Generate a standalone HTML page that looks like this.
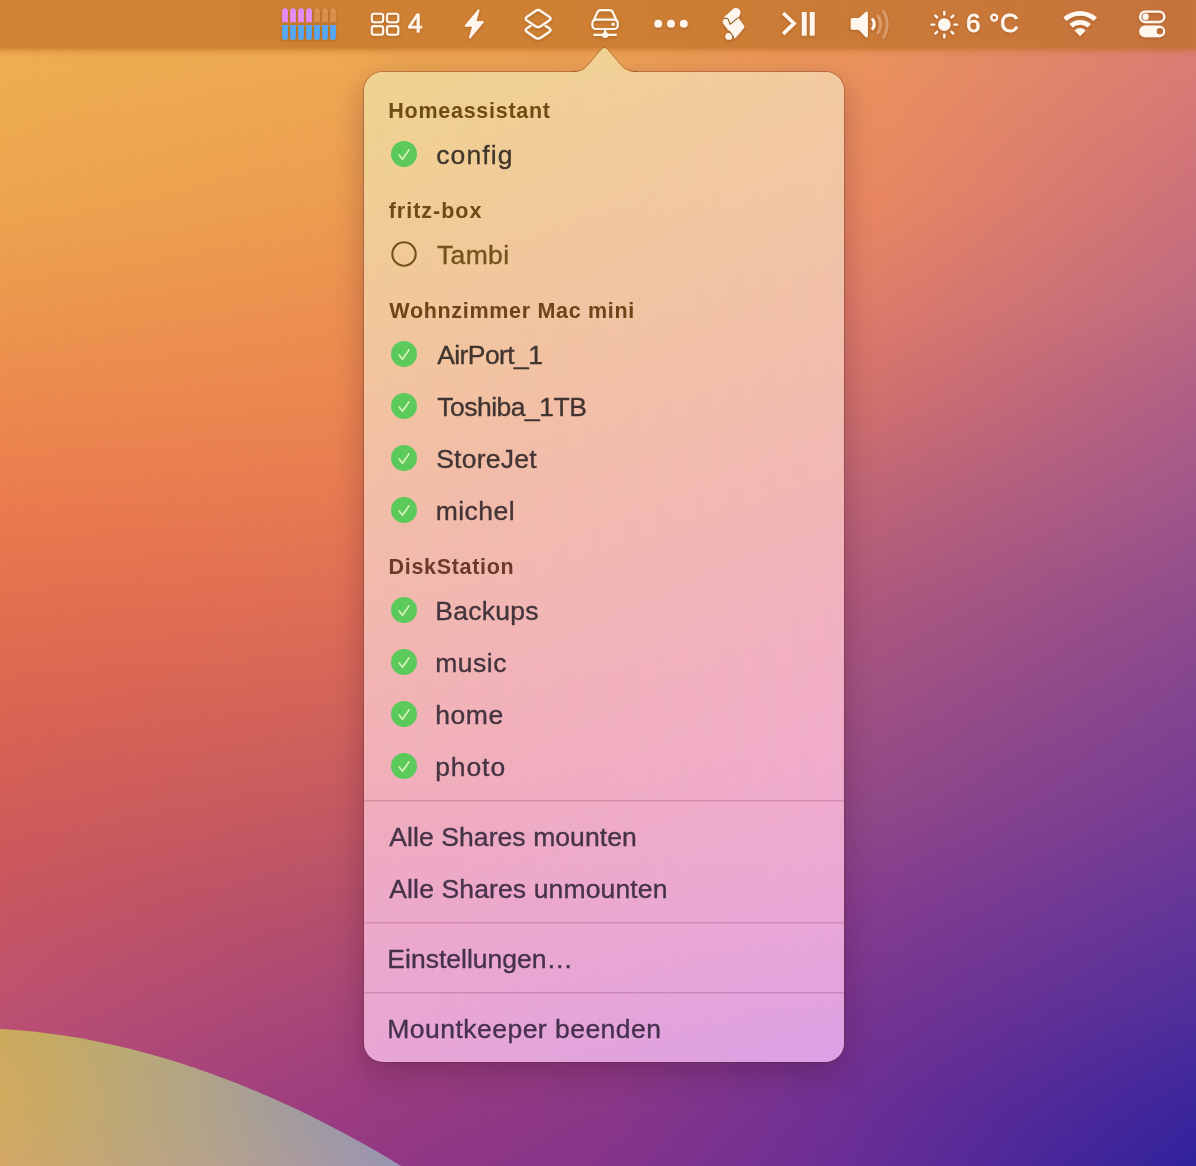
<!DOCTYPE html>
<html lang="de">
<head>
<meta charset="utf-8">
<title>Mountkeeper</title>
<style>
html,body{margin:0;padding:0;}
body{width:1196px;height:1166px;overflow:hidden;position:relative;background:#c8606a;
  font-family:"Liberation Sans",sans-serif;}
.wp{position:absolute;left:0;top:0;width:1196px;height:1166px;}
/* wallpaper: 4 vertical-gradient columns blended horizontally with masks */
.c0{background:linear-gradient(to bottom,#eeae50 0px,#eeae50 70px,#eda54f 200px,#ec984e 300px,#ec8a4e 400px,#eb7c4e 500px,#e4704f 600px,#dc6652 700px,#d25e58 800px,#c85660 900px,#be5270 1000px,#b04a78 1100px,#a8467c 1166px);}
.c1{background:linear-gradient(to bottom,#eea852 0px,#eea852 60px,#ec9c50 200px,#ec9050 300px,#eb8650 400px,#e67a52 500px,#de6e56 600px,#d2645a 700px,#c45a62 800px,#b4506c 900px,#a64678 1000px,#9a3c80 1100px,#943884 1166px);
  -webkit-mask-image:linear-gradient(to right,transparent 0px,#000 364px,#000 1196px);mask-image:linear-gradient(to right,transparent 0px,#000 364px,#000 1196px);}
.c2{background:linear-gradient(to bottom,#ec945c 0px,#ec945c 60px,#eb8a60 200px,#e27e68 300px,#d4726c 400px,#c06676 500px,#b05a7c 600px,#a25282 700px,#944a86 800px,#883e8e 900px,#7a3690 1000px,#6e3094 1100px,#6a2e96 1166px);
  -webkit-mask-image:linear-gradient(to right,transparent 364px,rgba(0,0,0,0.35) 604px,#000 844px,#000 1196px);mask-image:linear-gradient(to right,transparent 364px,rgba(0,0,0,0.35) 604px,#000 844px,#000 1196px);}
.c3{background:linear-gradient(to bottom,#da7c74 0px,#da7c74 60px,#cc707a 200px,#be6a80 300px,#ae5e86 400px,#a0568a 500px,#904c8c 600px,#824490 700px,#763c94 800px,#643698 900px,#52309a 1000px,#3c269c 1100px,#30229c 1166px);
  -webkit-mask-image:linear-gradient(to right,transparent 844px,#000 1196px);mask-image:linear-gradient(to right,transparent 844px,#000 1196px);}
.swoosh{position:absolute;left:0;top:0;width:1196px;height:1166px;}
.menubar{position:absolute;left:0;top:0;width:1196px;height:47px;
  background:linear-gradient(to right,#cf8332 0px,#ce7f33 600px,#c6733c 1196px);
}
.mbfade{position:absolute;left:0;top:47px;width:1196px;height:14px;
  background:linear-gradient(to right,#cf8332 0px,#ce7f33 600px,#c6733c 1196px);
  -webkit-mask-image:linear-gradient(to bottom,#000 0px,rgba(0,0,0,0.82) 1.5px,rgba(0,0,0,0.5) 3.5px,rgba(0,0,0,0.22) 6px,rgba(0,0,0,0.07) 8.5px,transparent 11px);
  mask-image:linear-gradient(to bottom,#000 0px,rgba(0,0,0,0.82) 1.5px,rgba(0,0,0,0.5) 3.5px,rgba(0,0,0,0.22) 6px,rgba(0,0,0,0.07) 8.5px,transparent 11px);}
.mb{position:absolute;left:0;top:0;width:1196px;height:48px;}
.mbtext{will-change:transform;position:absolute;color:#fff6ee;font-size:26px;line-height:48px;top:-1.5px;-webkit-text-stroke:0.8px #fff6ee;text-shadow:0 1px 3px rgba(90,40,0,0.3);white-space:nowrap;}
.popup{will-change:transform;position:absolute;left:364px;top:72px;width:480px;height:990px;border-radius:19px;
  background:linear-gradient(to bottom,#efd38f 0px,#f0cf93 100px,#f1ca98 200px,#f2c59e 300px,#f2bfa5 400px,#f2bbac 500px,#f2b5b2 600px,#f1b0b8 700px,#eeaac4 800px,#eba8ce 900px,#e8a6d4 990px);
  box-shadow:0 0 0 1px rgba(90,40,30,0.3),0 10px 30px rgba(60,10,40,0.30);}
.popup::before{content:"";position:absolute;left:0;top:0;width:480px;height:990px;border-radius:19px;
  background:linear-gradient(to bottom,#f2caa0 0px,#f2c6a4 100px,#f1c1a8 200px,#f1bcad 300px,#f1b7b4 400px,#f1b2bc 500px,#f1afc5 600px,#efabcc 700px,#eba8d3 800px,#e4a4dc 900px,#daa0e6 990px);
  -webkit-mask-image:linear-gradient(to right,transparent 0px,#000 480px);mask-image:linear-gradient(to right,transparent 0px,#000 480px);}
.arrow{position:absolute;left:564px;top:40px;width:84px;height:34px;}
.hdr{position:absolute;left:25px;margin-top:1px;font-weight:bold;font-size:21.5px;color:#6e4b16;white-space:nowrap;line-height:24px;}
.it{position:absolute;left:73px;margin-top:1px;font-size:26.5px;color:#3d3836;-webkit-text-stroke:0.35px currentColor;white-space:nowrap;line-height:30px;}
.it.dis{color:#76521a;}
.act{position:absolute;left:25px;font-size:26.5px;color:#43324a;-webkit-text-stroke:0.35px currentColor;white-space:nowrap;line-height:30px;}
.ck{position:absolute;left:27px;width:26px;height:26px;}
.sep{position:absolute;left:0;width:480px;height:2px;background:linear-gradient(to bottom,rgba(125,30,70,0.2) 0px,rgba(125,30,70,0.2) 1px,rgba(125,30,70,0.11) 1px,rgba(125,30,70,0.11) 2px);}
</style>
</head>
<body>
<div class="wp c0"></div>
<div class="wp c1"></div>
<div class="wp c2"></div>
<div class="wp c3"></div>
<svg class="swoosh" viewBox="0 0 1196 1166">
  <defs>
    <linearGradient id="sw" x1="0" y1="0" x2="420" y2="0" gradientUnits="userSpaceOnUse">
      <stop offset="0" stop-color="#d2a95e"/>
      <stop offset="0.12" stop-color="#c9aa65"/>
      <stop offset="0.3" stop-color="#bca877"/>
      <stop offset="0.5" stop-color="#b0a38a"/>
      <stop offset="0.7" stop-color="#a29b9f"/>
      <stop offset="1" stop-color="#8a92bc"/>
    </linearGradient>
    <linearGradient id="sw2" x1="0" y1="1029" x2="0" y2="1166" gradientUnits="userSpaceOnUse">
      <stop offset="0" stop-color="#a8b050" stop-opacity="0.16"/>
      <stop offset="0.5" stop-color="#b8a880" stop-opacity="0.0"/>
      <stop offset="1" stop-color="#d89a98" stop-opacity="0.16"/>
    </linearGradient>
  </defs>
  <path d="M0 1029 C 140 1036 280 1092 401 1166 L 0 1166 Z" fill="url(#sw)"/>
  <path d="M0 1029 C 140 1036 280 1092 401 1166 L 0 1166 Z" fill="url(#sw2)"/>
</svg>

<div class="menubar"></div>
<div class="mbfade"></div>
<svg class="mb" viewBox="0 0 1196 48" id="mbicons">
  <defs>
    <filter id="sh" x="-20%" y="-40%" width="140%" height="200%"><feDropShadow dx="0" dy="1" stdDeviation="1.6" flood-color="#5a2800" flood-opacity="0.32"/></filter>
    <mask id="scm"><rect x="515" y="0" width="50" height="48" fill="#fff"/><path d="M538.1 7.6 L553 18.6 L538.1 29.6 L523.2 18.6 Z" fill="#000" stroke="#000" stroke-width="1.6" stroke-linejoin="round"/></mask>
  </defs>
  <g filter="url(#sh)">
  <g><path d="M282.1 22.3 V11.2 a2.9 2.9 0 0 1 5.8 0 V22.3 Z" fill="#e58bf5"/><path d="M282.1 24.9 V37 a2.9 2.9 0 0 0 5.8 0 V24.9 Z" fill="#57a8f8"/><path d="M290.1 22.3 V11.2 a2.9 2.9 0 0 1 5.8 0 V22.3 Z" fill="#e58bf5"/><path d="M290.1 24.9 V37 a2.9 2.9 0 0 0 5.8 0 V24.9 Z" fill="#57a8f8"/><path d="M298.1 22.3 V11.2 a2.9 2.9 0 0 1 5.8 0 V22.3 Z" fill="#e58bf5"/><path d="M298.1 24.9 V37 a2.9 2.9 0 0 0 5.8 0 V24.9 Z" fill="#57a8f8"/><path d="M306.1 22.3 V11.2 a2.9 2.9 0 0 1 5.8 0 V22.3 Z" fill="#e58bf5"/><path d="M306.1 24.9 V37 a2.9 2.9 0 0 0 5.8 0 V24.9 Z" fill="#57a8f8"/><path d="M314.1 22.3 V11.2 a2.9 2.9 0 0 1 5.8 0 V22.3 Z" fill="#d8904b"/><path d="M314.1 24.9 V37 a2.9 2.9 0 0 0 5.8 0 V24.9 Z" fill="#57a8f8"/><path d="M322.1 22.3 V11.2 a2.9 2.9 0 0 1 5.8 0 V22.3 Z" fill="#d8904b"/><path d="M322.1 24.9 V37 a2.9 2.9 0 0 0 5.8 0 V24.9 Z" fill="#57a8f8"/><path d="M330.1 22.3 V11.2 a2.9 2.9 0 0 1 5.8 0 V22.3 Z" fill="#d8904b"/><path d="M330.1 24.9 V37 a2.9 2.9 0 0 0 5.8 0 V24.9 Z" fill="#57a8f8"/></g>
  <g fill="none" stroke="#fff6ee" stroke-width="2.1">
    <rect x="371.8" y="13.8" width="11.3" height="8.4" rx="2.2"/><rect x="387" y="13.8" width="11.3" height="8.4" rx="2.2"/>
    <rect x="371.8" y="26.1" width="11.3" height="8.6" rx="2.2"/><rect x="387" y="26.1" width="11.3" height="8.6" rx="2.2"/>
  </g>
  <path d="M478.7 10 L465.6 25.9 L473.2 25.9 L469.8 37.7 L483 21.9 L475.4 21.9 Z" fill="#fff6ee" stroke="#fff6ee" stroke-width="1.7" stroke-linejoin="round"/>
  <g fill="none" stroke="#fff6ee" stroke-width="2.4" stroke-linejoin="round">
    <path d="M535.1 11.2 Q538.1 9 541.1 11.2 L549.2 16.7 Q552 18.6 549.2 20.5 L541.1 26 Q538.1 28.2 535.1 26 L527 20.5 Q524.2 18.6 527 16.7 Z"/>
    <path mask="url(#scm)" d="M535.1 22.7 Q538.1 20.5 541.1 22.7 L549.2 28.2 Q552 30.1 549.2 32 L541.1 37.5 Q538.1 39.7 535.1 37.5 L527 32 Q524.2 30.1 527 28.2 Z"/>
  </g>
  <g fill="none" stroke="#fff6ee" stroke-width="2.2" stroke-linejoin="round">
    <rect x="592.4" y="19.7" width="25.4" height="9.3" rx="3.6"/>
    <path d="M593.2 21.5 L597.4 12.3 Q598.3 10.1 600.6 10.1 L609.6 10.1 Q611.9 10.1 612.8 12.3 L617 21.5"/>
    <path d="M605.1 30 V34.9 M593.4 34.9 H616.8"/>
  </g>
  <circle cx="613.2" cy="24.2" r="1.8" fill="#fff6ee"/><circle cx="605.1" cy="34.9" r="3" fill="#fff6ee"/>
  <g fill="#fff6ee"><circle cx="658.2" cy="23.7" r="3.9"/><circle cx="671" cy="23.7" r="3.9"/><circle cx="683.8" cy="23.7" r="3.9"/></g>
  <g stroke-linejoin="round" stroke-linecap="round">
    <circle cx="728.8" cy="36.4" r="3.4" fill="#fff6ee"/>
    <path d="M724.2 17.3 L733.6 8.9 Q736.5 6.9 739.2 9.6 Q741.2 12.2 739.3 15.2 L738 17.7 L743.6 25.4 Q744.6 26.9 743.4 28.3 L735.6 37.6 Q734.8 38.3 734 37.3 L733.1 36 L723.4 23.4 Q722.4 21.6 723.6 19.6 Z" fill="#fff6ee" stroke="#fff6ee" stroke-width="0.6"/>
  </g>
  <path d="M783.2 13 L794.1 23.4 L783.2 33.9" fill="none" stroke="#fff6ee" stroke-width="3.6"/>
  <rect x="801.8" y="12" width="4.9" height="23.7" fill="#fff6ee"/><rect x="809.8" y="12" width="4.9" height="23.7" fill="#fff6ee"/>
  <path d="M852.3 18.1 H857.4 Q858.8 18.1 859.8 17.2 L865.3 12.3 Q867.9 10.2 867.9 13.4 V35.6 Q867.9 38.8 865.3 36.7 L859.8 30.7 Q858.8 29.8 857.4 29.8 H852.3 Q850.8 29.8 850.8 28.3 V19.6 Q850.8 18.1 852.3 18.1 Z" fill="#fff6ee"/>
  <path d="M872.7 19.5 A8 8 0 0 1 872.7 28.6" fill="none" stroke="#fff6ee" stroke-width="3" stroke-linecap="round"/>
  <g fill="none" stroke="#fff6ee" stroke-linecap="round">
    <path d="M878 15.6 A16.6 16.6 0 0 1 878 32.8" stroke-width="2.6" opacity="0.3"/>
    <path d="M883.4 11.2 A24.1 24.1 0 0 1 883.4 37.3" stroke-width="2.6" opacity="0.27"/>
  </g>
  <circle cx="944.3" cy="24.6" r="6.3" fill="#fff6ee"/>
  <g stroke="#fff6ee" stroke-width="2.4" stroke-linecap="round"><line x1="954.5" y1="24.6" x2="957.0" y2="24.6"/><line x1="951.5" y1="31.8" x2="953.3" y2="33.6"/><line x1="944.3" y1="34.8" x2="944.3" y2="37.3"/><line x1="937.1" y1="31.8" x2="935.3" y2="33.6"/><line x1="934.1" y1="24.6" x2="931.6" y2="24.6"/><line x1="937.1" y1="17.4" x2="935.3" y2="15.6"/><line x1="944.3" y1="14.4" x2="944.3" y2="11.9"/><line x1="951.5" y1="17.4" x2="953.3" y2="15.6"/></g>
  <g fill="none" stroke="#fff6ee"><path d="M1064.97 19.28 A22.4 22.4 0 0 1 1095.23 19.28" stroke-width="4.9"/><path d="M1070.98 25.85 A13.5 13.5 0 0 1 1089.22 25.85" stroke-width="4.7"/></g><path d="M1080.1 35.8 L1075.03 30.55 A7.3 7.3 0 0 1 1085.17 30.55 Z" fill="#fff6ee" stroke="#fff6ee" stroke-width="0.9" stroke-linejoin="round"/>
  <rect x="1140.1" y="11.6" width="24.2" height="10.4" rx="5.2" fill="none" stroke="#fff6ee" stroke-width="2.4"/>
  <circle cx="1145.6" cy="16.8" r="3.2" fill="#fff6ee"/>
  <path d="M1145 25.4 H1159.4 A5.9 5.9 0 0 1 1159.4 37.2 H1145 A5.9 5.9 0 0 1 1145 25.4 Z M1163.1 31.3 A3.2 3.2 0 1 0 1156.7 31.3 A3.2 3.2 0 1 0 1163.1 31.3 Z" fill="#fff6ee" fill-rule="evenodd"/>
  </g>
  <g fill="none" stroke="#8f5a22" stroke-linecap="round" stroke-linejoin="round">
    <path d="M723.6 18.9 Q726.3 17.1 728.3 19.5 L730.1 24.3 L737.9 17.8" stroke-width="1.1"/>
    <path d="M729.3 31.4 L733.7 37" stroke-width="1.1"/>
  </g>
</svg>
<div class="mbtext" style="left:408px;">4</div>
<div class="mbtext" style="left:966px;letter-spacing:0.6px;">6 °C</div>

<div class="popup">
  <div class="hdr" style="top:26px;letter-spacing:0.73px;margin-left:-0.7px;color:#6e4c14">Homeassistant</div>
  <svg class="ck" style="top:69px" viewBox="0 0 26 26"><circle cx="13" cy="13" r="13" fill="#5cc95b"/><path d="M8.2 14 L11.5 18.2 L17.9 9" fill="none" stroke="#e2f4c6" stroke-opacity="0.9" stroke-width="1.7" stroke-linecap="round" stroke-linejoin="round"/></svg>
  <div class="it" style="top:67px;letter-spacing:1.1px;margin-left:-0.8px;color:#40362c">config</div>

  <div class="hdr" style="top:126px;letter-spacing:0.98px;margin-left:-0.3px;color:#704a16">fritz-box</div>
  <svg class="ck" style="top:169px" viewBox="0 0 26 26"><circle cx="13" cy="13" r="11.7" fill="none" stroke="#76521a" stroke-width="2.1"/></svg>
  <div class="it dis" style="top:167px;letter-spacing:0.38px;margin-left:-0.1px">Tambi</div>

  <div class="hdr" style="top:226px;letter-spacing:0.69px;margin-left:0.3px;color:#6f4518">Wohnzimmer Mac mini</div>
  <svg class="ck" style="top:269px" viewBox="0 0 26 26"><circle cx="13" cy="13" r="13" fill="#5cc95b"/><path d="M8.2 14 L11.5 18.2 L17.9 9" fill="none" stroke="#e2f4c6" stroke-opacity="0.9" stroke-width="1.7" stroke-linecap="round" stroke-linejoin="round"/></svg>
  <div class="it" style="top:267px;letter-spacing:-0.59px;margin-left:0.2px;color:#41352f">AirPort_1</div>
  <svg class="ck" style="top:321px" viewBox="0 0 26 26"><circle cx="13" cy="13" r="13" fill="#5cc95b"/><path d="M8.2 14 L11.5 18.2 L17.9 9" fill="none" stroke="#e2f4c6" stroke-opacity="0.9" stroke-width="1.7" stroke-linecap="round" stroke-linejoin="round"/></svg>
  <div class="it" style="top:319px;letter-spacing:-0.5px;margin-left:0.2px;color:#413432">Toshiba_1TB</div>
  <svg class="ck" style="top:373px" viewBox="0 0 26 26"><circle cx="13" cy="13" r="13" fill="#5cc95b"/><path d="M8.2 14 L11.5 18.2 L17.9 9" fill="none" stroke="#e2f4c6" stroke-opacity="0.9" stroke-width="1.7" stroke-linecap="round" stroke-linejoin="round"/></svg>
  <div class="it" style="top:371px;letter-spacing:0.23px;margin-left:-0.8px;color:#423434">StoreJet</div>
  <svg class="ck" style="top:425px" viewBox="0 0 26 26"><circle cx="13" cy="13" r="13" fill="#5cc95b"/><path d="M8.2 14 L11.5 18.2 L17.9 9" fill="none" stroke="#e2f4c6" stroke-opacity="0.9" stroke-width="1.7" stroke-linecap="round" stroke-linejoin="round"/></svg>
  <div class="it" style="top:423px;letter-spacing:0.45px;margin-left:-1.3px;color:#433436">michel</div>

  <div class="hdr" style="top:482px;letter-spacing:0.69px;margin-left:-0.5px;color:#6c3a28">DiskStation</div>
  <svg class="ck" style="top:525px" viewBox="0 0 26 26"><circle cx="13" cy="13" r="13" fill="#5cc95b"/><path d="M8.2 14 L11.5 18.2 L17.9 9" fill="none" stroke="#e2f4c6" stroke-opacity="0.9" stroke-width="1.7" stroke-linecap="round" stroke-linejoin="round"/></svg>
  <div class="it" style="top:523px;letter-spacing:0.28px;margin-left:-1.8px;color:#43353c">Backups</div>
  <svg class="ck" style="top:577px" viewBox="0 0 26 26"><circle cx="13" cy="13" r="13" fill="#5cc95b"/><path d="M8.2 14 L11.5 18.2 L17.9 9" fill="none" stroke="#e2f4c6" stroke-opacity="0.9" stroke-width="1.7" stroke-linecap="round" stroke-linejoin="round"/></svg>
  <div class="it" style="top:575px;letter-spacing:0.52px;margin-left:-1.8px;color:#44343e">music</div>
  <svg class="ck" style="top:629px" viewBox="0 0 26 26"><circle cx="13" cy="13" r="13" fill="#5cc95b"/><path d="M8.2 14 L11.5 18.2 L17.9 9" fill="none" stroke="#e2f4c6" stroke-opacity="0.9" stroke-width="1.7" stroke-linecap="round" stroke-linejoin="round"/></svg>
  <div class="it" style="top:627px;letter-spacing:0.55px;margin-left:-1.8px;color:#443440">home</div>
  <svg class="ck" style="top:681px" viewBox="0 0 26 26"><circle cx="13" cy="13" r="13" fill="#5cc95b"/><path d="M8.2 14 L11.5 18.2 L17.9 9" fill="none" stroke="#e2f4c6" stroke-opacity="0.9" stroke-width="1.7" stroke-linecap="round" stroke-linejoin="round"/></svg>
  <div class="it" style="top:679px;letter-spacing:0.9px;margin-left:-1.8px;color:#453342">photo</div>

  <div class="sep" style="top:728px;"></div>
  <div class="act" style="top:750px;letter-spacing:0.08px;margin-left:0.3px;color:#463348">Alle Shares mounten</div>
  <div class="act" style="top:802px;letter-spacing:0.13px;margin-left:0.3px;color:#46324a">Alle Shares unmounten</div>
  <div class="sep" style="top:850px;"></div>
  <div class="act" style="top:872px;letter-spacing:0.01px;margin-left:-1.7px;color:#46314c">Einstellungen…</div>
  <div class="sep" style="top:920px;"></div>
  <div class="act" style="top:942px;letter-spacing:0.47px;margin-left:-1.7px;color:#46304e">Mountkeeper beenden</div>
</div>
<svg class="arrow" viewBox="0 0 84 34">
  <path d="M8 33 L8 32 C 17 32 20.5 29.4 24.1 25.1 L 37.6 9.1 Q 40.4 6.2 43.2 9.1 L 56.8 25.1 C 60.4 29.4 64 32 73 32 L73 33 Z" fill="#f0d093"/>
  <path d="M8 31.5 C 17 31.5 20.5 29 24.1 24.7 L 37.6 8.7 Q 40.4 5.8 43.2 8.7 L 56.8 24.7 C 60.4 29 64 31.5 73 31.5" fill="none" stroke="rgba(110,50,0,0.45)" stroke-width="0.9"/>
</svg>
</body>
</html>
